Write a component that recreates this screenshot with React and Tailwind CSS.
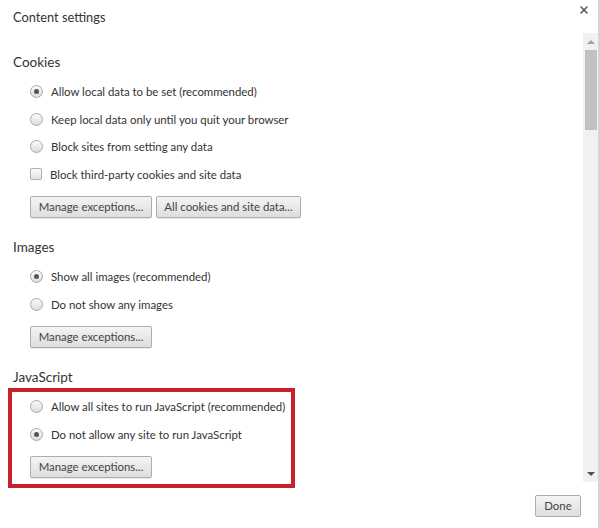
import { X } from 'lucide-react'

const font = { fontFamily: 'Lato, "Noto Sans", sans-serif' }

function Radio({ checked, label }) {
  return (
    <div className="flex items-center h-[27.5px] pl-[17px] whitespace-nowrap">
      <span className="w-[13px] h-[13px] rounded-full border border-[#a9a9a9] bg-gradient-to-b from-[#fbfbfb] to-[#dcdcdc] flex items-center justify-center shrink-0">
        {checked && <span className="w-[5px] h-[5px] rounded-full bg-[#555]" />}
      </span>
      <span className="ml-[8px] text-[11.4px] text-[#333] leading-none">{label}</span>
    </div>
  )
}

function Checkbox({ label }) {
  return (
    <div className="flex items-center h-[27.5px] pl-[17px] whitespace-nowrap">
      <span className="w-[12px] h-[12px] rounded-[2px] border border-[#b0b0b0] bg-gradient-to-b from-[#fbfbfb] to-[#e2e2e2] shrink-0" />
      <span className="ml-[8px] text-[11.4px] text-[#333] leading-none">{label}</span>
    </div>
  )
}

function Btn({ children, w }) {
  return (
    <button className={`h-[22px] ${w} whitespace-nowrap rounded-[2px] border border-[#adadad] bg-gradient-to-b from-[#f4f4f4] to-[#dedede] text-[11.4px] text-[#444] leading-none shadow-[0_1px_0_rgba(0,0,0,0.08)]`}>
      {children}
    </button>
  )
}

function Header({ children, className = 'h-[30px]' }) {
  return (
    <div className={`flex items-center text-[13.5px] text-[#333] ${className}`}>{children}</div>
  )
}

export default function App() {
  return (
    <div className="w-[600px] h-[528px] bg-white flex flex-col overflow-hidden border-r-2 border-[#d4d4d4]" style={font}>
      {/* title bar */}
      <div className="h-[33px] flex items-start justify-between pl-[13px] pr-[8px]">
        <span className="mt-[8px] text-[12.8px] text-[#333] leading-[18px]">Content settings</span>
        <X className="mt-[4px] w-[12px] h-[12px] text-[#555]" strokeWidth={3} />
      </div>

      <div className="flex h-[449px]">
        <div className="flex-1 pl-[13px] pt-[14px]">
          <Header>Cookies</Header>
          <div className="mt-[1px]">
            <Radio checked label="Allow local data to be set (recommended)" />
            <Radio label="Keep local data only until you quit your browser" />
            <Radio label="Block sites from setting any data" />
            <Checkbox label="Block third-party cookies and site data" />
          </div>
          <div className="mt-[8px] pl-[17px] flex gap-[4px]">
            <Btn w="w-[122px]">Manage exceptions...</Btn>
            <Btn w="w-[145px]">All cookies and site data...</Btn>
          </div>

          <Header className="mt-[14px] h-[30px]">Images</Header>
          <div className="mt-[1px]">
            <Radio checked label="Show all images (recommended)" />
            <Radio label="Do not show any images" />
          </div>
          <div className="mt-[8px] pl-[17px] flex">
            <Btn w="w-[122px]">Manage exceptions...</Btn>
          </div>

          <Header className="mt-[14px] h-[26px] pt-[4px]">JavaScript</Header>
          <div className="ml-[-5px] w-[287px] border-4 border-[#c8202c] pt-[1px] pb-[6px] pl-[1px]">
            <Radio label="Allow all sites to run JavaScript (recommended)" />
            <Radio checked label="Do not allow any site to run JavaScript" />
            <div className="mt-[8px] pl-[17px] flex">
              <Btn w="w-[122px]">Manage exceptions...</Btn>
            </div>
          </div>
        </div>

        {/* scrollbar */}
        <div className="w-[15px] bg-[#f1f1f1] flex flex-col items-center">
          <div className="h-[17px] flex items-center justify-center">
            <span className="w-0 h-0 border-l-[4px] border-r-[4px] border-b-[4px] border-l-transparent border-r-transparent border-b-[#a3a3a3]" />
          </div>
          <div className="w-[12px] h-[80px] bg-[#c1c1c1]" />
          <div className="flex-1" />
          <div className="h-[17px] flex items-center justify-center">
            <span className="w-0 h-0 border-l-[4px] border-r-[4px] border-t-[4px] border-l-transparent border-r-transparent border-t-[#505050]" />
          </div>
        </div>
      </div>

      <div className="flex-1 flex items-start justify-end pr-[17px] pt-[13px]">
        <button className="h-[22px] w-[46px] rounded-[2px] border border-[#adadad] bg-gradient-to-b from-[#f4f4f4] to-[#dedede] text-[11.4px] text-[#444] leading-none">
          Done
        </button>
      </div>
    </div>
  )
}
